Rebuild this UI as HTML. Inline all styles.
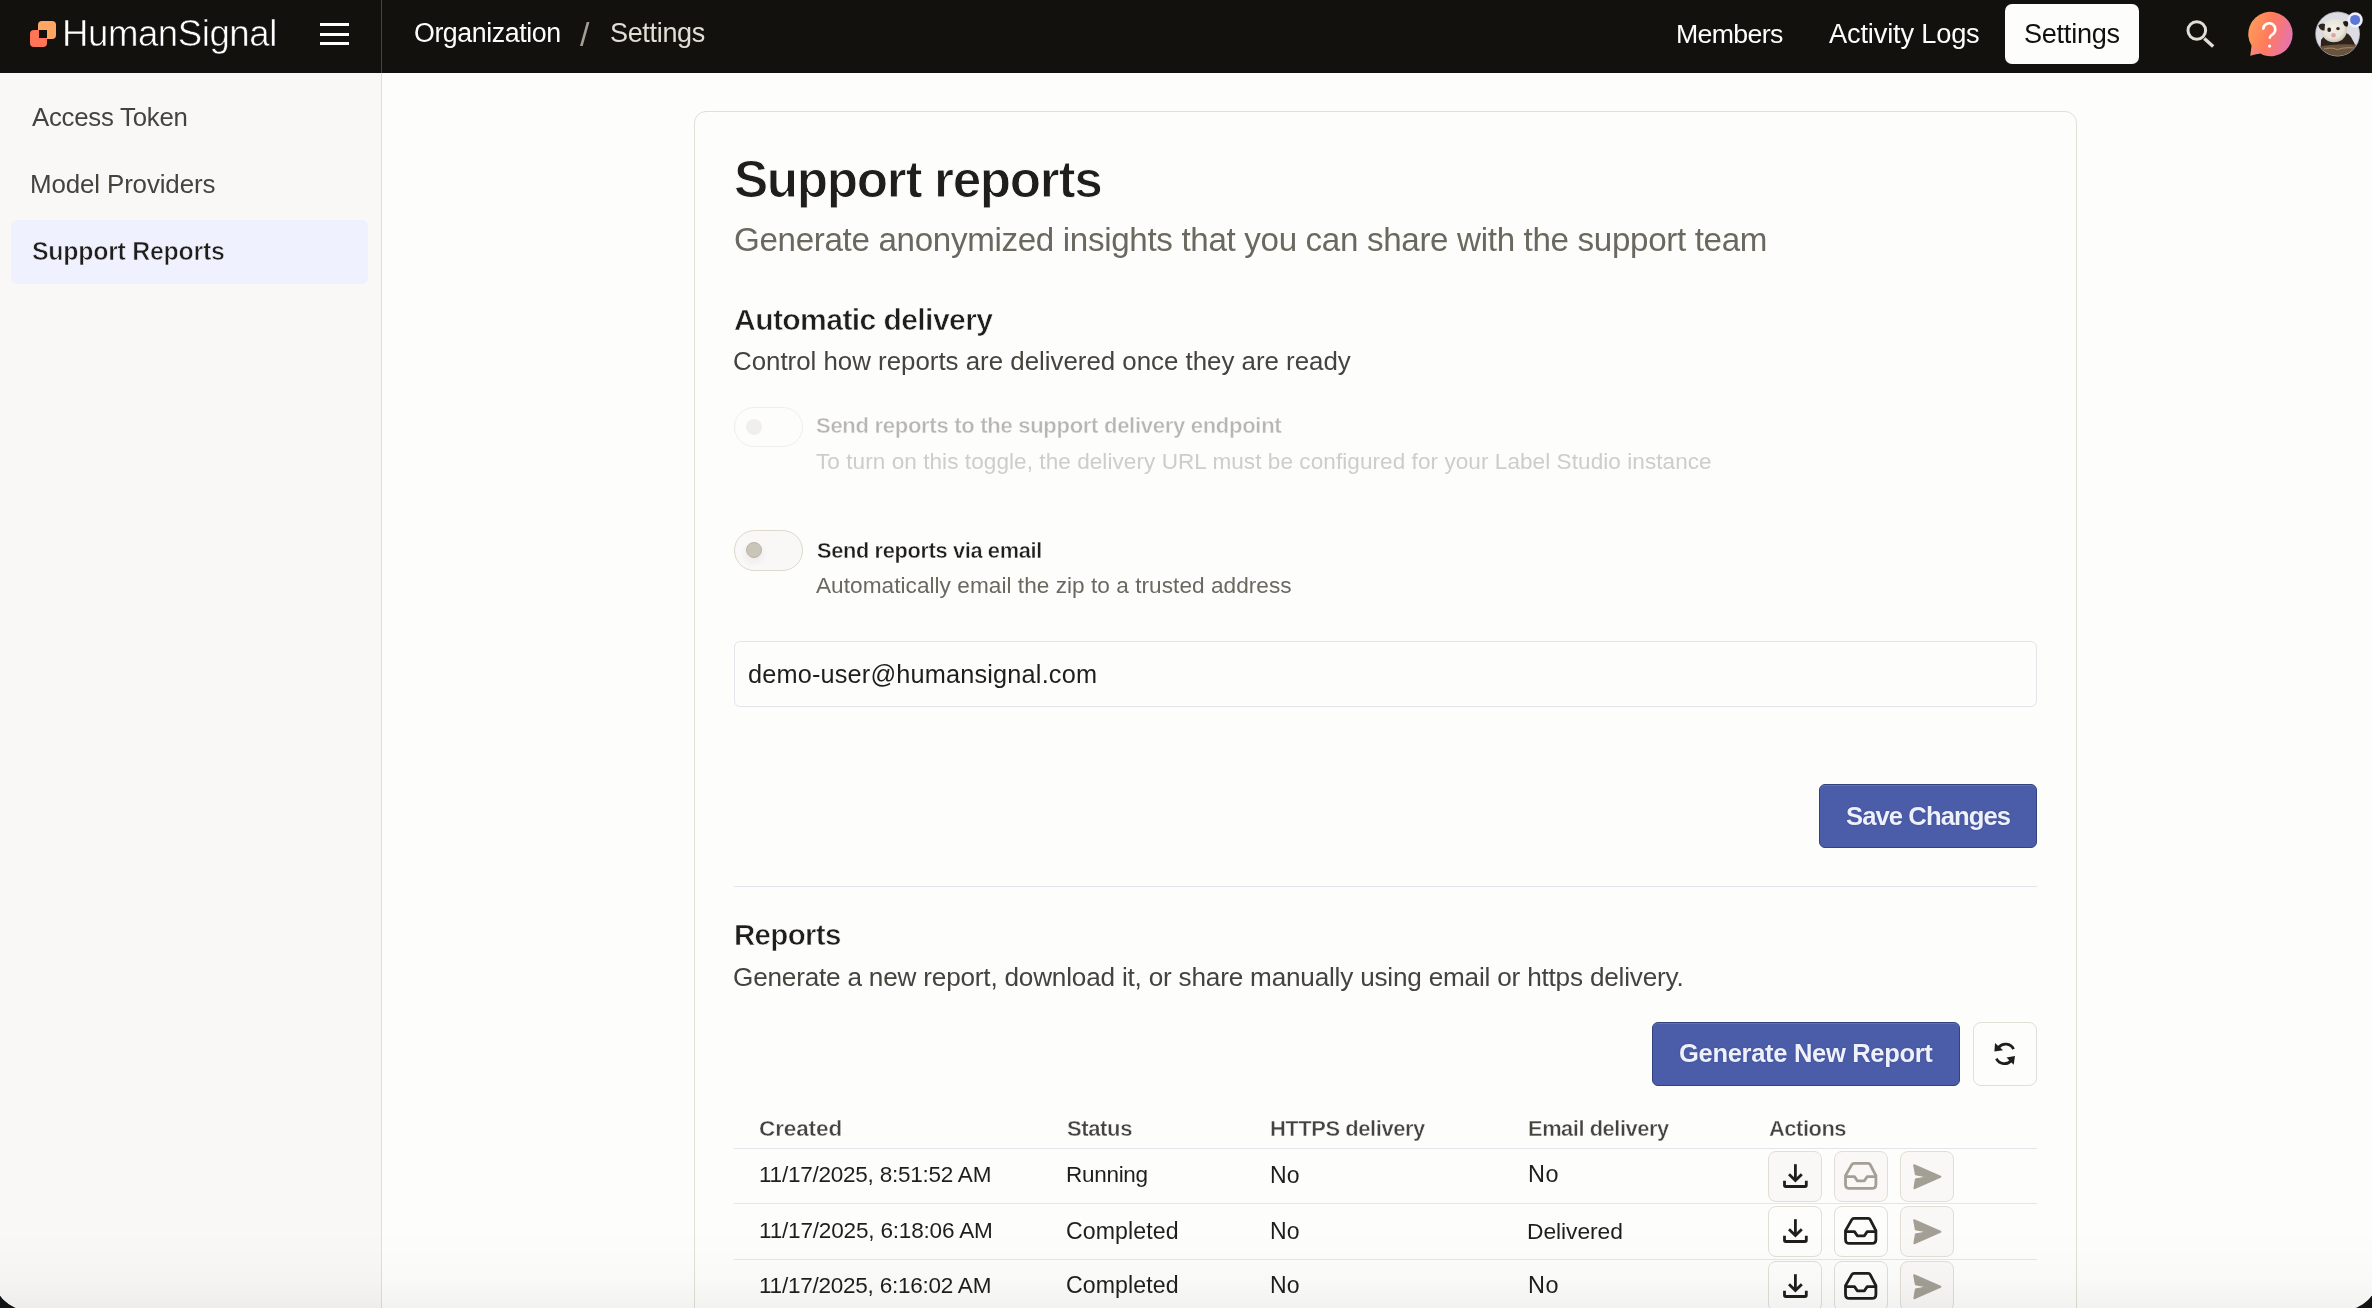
<!DOCTYPE html>
<html><head><meta charset="utf-8"><style>
*{box-sizing:border-box;margin:0;padding:0}
html,body{width:2372px;height:1308px;overflow:hidden;background:#111315}
body{font-family:"Liberation Sans",sans-serif;position:relative}
.win{position:absolute;left:-6px;top:0;width:2384px;height:1310px;background:#fdfdfc;border-bottom-left-radius:34px;border-bottom-right-radius:34px;overflow:hidden}
.abs{position:absolute}
.t{position:absolute;white-space:nowrap;will-change:transform}
.ic{position:absolute;overflow:visible}
.ab{position:absolute;width:54px;height:51px;border:1px solid #e1ded5;border-radius:8px}
</style></head><body>
<div class="win"><div style="position:absolute;left:6px;top:0;width:2372px;height:1308px">
<!-- nav -->
<div class="abs" style="left:0;top:0;width:2372px;height:73px;background:#12110d"></div>
<div class="abs" style="left:381px;top:0;width:1px;height:73px;background:#45433e"></div>
<!-- logo -->
<div class="abs" style="left:38px;top:21.2px;width:17.8px;height:17.9px;background:#ffa663;border-radius:4px"></div>
<div class="abs" style="left:29.9px;top:29.8px;width:17.3px;height:17.3px;background:#ff7556;border-radius:4px"></div>
<div class="abs" style="left:39px;top:30.2px;width:7.9px;height:7.7px;background:#12110d"></div>
<!-- hamburger -->
<div class="abs" style="left:320px;top:23px;width:29px;height:3px;background:#fff"></div>
<div class="abs" style="left:320px;top:32.5px;width:29px;height:3.2px;background:#fff"></div>
<div class="abs" style="left:320px;top:42px;width:29px;height:3px;background:#fff"></div>
<!-- settings btn -->
<div class="abs" style="left:2005px;top:4px;width:134px;height:60px;background:#fdfdfc;border-radius:7px"></div>
<div class="t" id="e0" style="left:61.56px;top:15.91px;font-size:36.61px;line-height:36.61px;letter-spacing:-0.448px;color:#ffffff;-webkit-text-stroke:0.6px #12110d;">HumanSignal</div><div class="t" id="e1" style="left:414.16px;top:19.73px;font-size:26.78px;line-height:26.78px;letter-spacing:-0.429px;color:#fdfdfc;">Organization</div><div class="t" id="e2" style="left:580.00px;top:17.65px;font-size:33.85px;line-height:33.85px;letter-spacing:0.000px;color:#a49f95;">/</div><div class="t" id="e3" style="left:609.70px;top:19.55px;font-size:26.99px;line-height:26.99px;letter-spacing:-0.324px;color:#e1ded5;">Settings</div><div class="t" id="e4" style="left:1676.40px;top:20.71px;font-size:26.69px;line-height:26.69px;letter-spacing:-0.647px;color:#fdfdfc;">Members</div><div class="t" id="e5" style="left:1829.00px;top:20.24px;font-size:27.24px;line-height:27.24px;letter-spacing:-0.178px;color:#fdfdfc;">Activity Logs</div><div class="t" id="e6" style="left:2024.20px;top:20.36px;font-size:27.10px;line-height:27.10px;letter-spacing:-0.267px;color:#12110d;">Settings</div>
<!-- search -->
<svg class="ic" style="left:2180px;top:14px" width="40" height="40" viewBox="0 0 40 40" fill="none" stroke="#e1ded5" stroke-width="3">
<circle cx="16.8" cy="16.5" r="8.8"/><path d="M24.3 24.4L33.2 32.4" stroke-width="3.4" stroke-linecap="butt"/></svg>
<!-- help -->
<svg class="ic" style="left:2240px;top:4px" width="60" height="60" viewBox="2240 4 60 60">
<defs><linearGradient id="hg" gradientUnits="userSpaceOnUse" x1="2248" y1="28" x2="2293" y2="42"><stop offset="0" stop-color="#ff9b58"/><stop offset="0.45" stop-color="#ff7b5c"/><stop offset="1" stop-color="#e373b8"/></linearGradient>
<linearGradient id="hg2" gradientUnits="userSpaceOnUse" x1="2250" y1="46" x2="2262" y2="56"><stop offset="0" stop-color="#f57f86"/><stop offset="1" stop-color="#e47ad0"/></linearGradient></defs>
<path d="M2251.6 45.8L2250.3 55.8Q2256 54.2 2260.8 53.6Q2262.6 54.9 2265 55.6A22.2 22.2 0 1 0 2251.6 45.8Z" fill="url(#hg)"/>
<path d="M2251.6 45.8L2250.3 55.8Q2256 54.2 2260.8 53.6Q2262.6 54.9 2265 55.6L2259 49Z" fill="url(#hg2)" opacity="0.3"/>
<path d="M2263.3 28.6A6 6 0 1 1 2272.6 34.3Q2269.8 36 2269.8 37.6" fill="none" stroke="#fff" stroke-width="2.6" stroke-linecap="round"/>
<circle cx="2269.6" cy="46.1" r="1.6" fill="#fff"/></svg>
<!-- avatar -->
<svg class="ic" style="left:2310px;top:6px" width="62" height="56" viewBox="2310 6 62 56">
<defs><clipPath id="av"><circle cx="2337.6" cy="34" r="21.6"/></clipPath>
<radialGradient id="fur" cx="0.45" cy="0.4" r="0.6"><stop offset="0" stop-color="#f4f1ea"/><stop offset="0.7" stop-color="#e8e3d8"/><stop offset="1" stop-color="#c9c1b3"/></radialGradient></defs>
<circle cx="2337.6" cy="34" r="22.4" fill="#a9a8b0"/>
<g clip-path="url(#av)">
<rect x="2310" y="6" width="62" height="56" fill="#dcdde2"/>
<path d="M2320 62L2321 40Q2325 33 2336 33Q2346 30 2351 37L2358 50L2360 62Z" fill="#2e221c"/>
<path d="M2322 31Q2323 20 2334 19Q2345 18.5 2347 27Q2348 35 2342 40Q2335 44 2328 41Q2321 37 2322 31Z" fill="url(#fur)"/>
<path d="M2318.3 25.5Q2321 22.5 2325 24L2324.5 30.5Q2320 31 2318.3 25.5Z" fill="#2d2520"/>
<path d="M2343 22Q2346 20 2348.5 22.5L2347.5 26.5Q2344 27.5 2343 22Z" fill="#221a16"/>
<ellipse cx="2329.2" cy="29.8" rx="1.9" ry="2.2" fill="#2a211c"/><ellipse cx="2338" cy="28.6" rx="1.8" ry="1.6" fill="#3b2b22"/>
<ellipse cx="2333.5" cy="35.2" rx="2.3" ry="2.3" fill="#dba4a2"/>
<path d="M2318 47Q2336 43 2360 45V62H2318Z" fill="#6a543d"/>
<path d="M2324 49Q2331 47 2337 49.5Q2345 47 2355 48" fill="none" stroke="#9c8266" stroke-width="1.2"/>
</g>
<circle cx="2355.2" cy="19.8" r="7.6" fill="#eef0fb"/><circle cx="2355.1" cy="19.9" r="5" fill="#5b78d8"/>
</svg>
<!-- sidebar -->
<div class="abs" style="left:0;top:73px;width:381px;height:1235px;background:#f9f8f6"></div>
<div class="abs" style="left:381px;top:73px;width:1px;height:1235px;background:#e1ded5"></div>
<div class="abs" style="left:11px;top:220px;width:357px;height:64px;background:#eff2fe;border-radius:6px"></div>
<div class="t" id="e7" style="left:32.00px;top:104.60px;font-size:25.75px;line-height:25.75px;letter-spacing:-0.232px;color:#45433e;">Access Token</div><div class="t" id="e8" style="left:30.40px;top:172.07px;font-size:25.91px;line-height:25.91px;letter-spacing:-0.130px;color:#45433e;">Model Providers</div><div class="t" id="e9" style="left:32.00px;top:239.39px;font-size:24.94px;line-height:24.94px;letter-spacing:-0.282px;color:#1f1e1b;font-weight:700;-webkit-text-stroke:0.6px #eff2fe;">Support Reports</div>
<!-- card -->
<div class="abs" style="left:694px;top:111px;width:1383px;height:1300px;border:1px solid #e1ded5;border-radius:12px;background:#fdfdfc"></div>
<!-- toggles -->
<div class="abs" style="left:734px;top:407px;width:69px;height:40px;border:1px solid #f0efeb;border-radius:20px;background:#fdfdfc"></div>
<div class="abs" style="left:746px;top:419px;width:16px;height:16px;border-radius:50%;background:#f0efeb"></div>
<div class="abs" style="left:734px;top:530px;width:69px;height:41px;border:1px solid #dcd8cc;border-radius:21px;background:#f9f8f6;box-shadow:inset 0 0 0 0 transparent"></div>
<div class="abs" style="left:740px;top:540px;width:28px;height:28px;border-radius:50%;background:radial-gradient(circle, rgba(0,0,0,0.06), rgba(0,0,0,0) 70%)"></div>
<div class="abs" style="left:746px;top:542px;width:16px;height:16px;border-radius:50%;background:#cac5b8;border:1px solid #bab4a6"></div>
<!-- input -->
<div class="abs" style="left:734px;top:641px;width:1303px;height:66px;border:1px solid #e4e4ec;border-radius:6px;background:#fdfdfc"></div>
<!-- save btn -->
<div class="abs" style="left:1819px;top:784px;width:218px;height:64px;border:1px solid #33427f;border-radius:6px;background:#4b5da8;box-shadow:inset 0 1px 0 rgba(255,255,255,0.13)"></div>
<!-- divider -->
<div class="abs" style="left:734px;top:886px;width:1303px;height:1px;background:#e4e4ec"></div>
<!-- generate btn -->
<div class="abs" style="left:1652px;top:1022px;width:308px;height:64px;border:1px solid #33427f;border-radius:6px;background:#4b5da8;box-shadow:inset 0 1px 0 rgba(255,255,255,0.13)"></div>
<div class="abs" style="left:1973px;top:1022px;width:64px;height:64px;border:1px solid #e1ded5;border-radius:8px;background:#fdfdfc"></div>
<svg class="ic" style="left:1990px;top:1039px" width="30" height="30" viewBox="1990 1039 30 30">
<path d="M2013.6 1049.2A9 9 0 0 0 1998.5 1047.5" fill="none" stroke="#1f1e1b" stroke-width="2.8"/>
<path d="M1995 1043L1994.4 1051.5L2003 1050.3Z" fill="#1f1e1b"/>
<path d="M1996.4 1058.6A9 9 0 0 0 2011.3 1060.5" fill="none" stroke="#1f1e1b" stroke-width="2.8"/>
<path d="M2015 1056.1L2013.7 1064.8L2006.5 1057.5Z" fill="#1f1e1b"/>
</svg>
<!-- table lines -->
<div class="abs" style="left:734px;top:1148px;width:1303px;height:1px;background:#e4e4ec"></div>
<div class="abs" style="left:734px;top:1203px;width:1303px;height:1px;background:#e4e4ec"></div>
<div class="abs" style="left:734px;top:1259px;width:1303px;height:1px;background:#e4e4ec"></div>
<div class="t" id="e10" style="left:733.90px;top:153.88px;font-size:51.29px;line-height:51.29px;letter-spacing:-1.343px;color:#1f1e1b;font-weight:700;-webkit-text-stroke:1px #fdfdfc;">Support reports</div><div class="t" id="e11" style="left:734.20px;top:223.23px;font-size:33.16px;line-height:33.16px;letter-spacing:-0.333px;color:#6b6860;">Generate anonymized insights that you can share with the support team</div><div class="t" id="e12" style="left:734.00px;top:304.52px;font-size:30.10px;line-height:30.10px;letter-spacing:-0.604px;color:#1f1e1b;font-weight:700;-webkit-text-stroke:0.6px #fdfdfc;">Automatic delivery</div><div class="t" id="e13" style="left:733.20px;top:349.11px;font-size:25.86px;line-height:25.86px;letter-spacing:-0.006px;color:#45433e;">Control how reports are delivered once they are ready</div><div class="t" id="e14" style="left:815.74px;top:415.22px;font-size:22.06px;line-height:22.06px;letter-spacing:-0.302px;color:#b8b6b1;font-weight:700;-webkit-text-stroke:0.4px #fdfdfc;">Send reports to the support delivery endpoint</div><div class="t" id="e15" style="left:816.00px;top:450.72px;font-size:22.54px;line-height:22.54px;letter-spacing:0.067px;color:#cecdc9;">To turn on this toggle, the delivery URL must be configured for your Label Studio instance</div><div class="t" id="e16" style="left:816.54px;top:539.53px;font-size:21.82px;line-height:21.82px;letter-spacing:-0.360px;color:#1f1e1b;font-weight:700;-webkit-text-stroke:0.4px #fdfdfc;">Send reports via email</div><div class="t" id="e17" style="left:816.00px;top:574.85px;font-size:22.62px;line-height:22.62px;letter-spacing:0.039px;color:#6b6860;">Automatically email the zip to a trusted address</div><div class="t" id="e18" style="left:747.70px;top:661.68px;font-size:25.30px;line-height:25.30px;letter-spacing:0.171px;color:#1f1e1b;">demo-user@humansignal.com</div><div class="t" id="e19" style="left:1846.20px;top:803.67px;font-size:25.67px;line-height:25.67px;letter-spacing:-0.940px;color:#eef0fb;font-weight:700;text-shadow:0 0 1.5px rgba(25,35,90,0.45);">Save Changes</div><div class="t" id="e20" style="left:734.32px;top:919.96px;font-size:29.46px;line-height:29.46px;letter-spacing:-0.668px;color:#1f1e1b;font-weight:700;-webkit-text-stroke:0.6px #fdfdfc;">Reports</div><div class="t" id="e21" style="left:733.28px;top:963.86px;font-size:26.15px;line-height:26.15px;letter-spacing:-0.199px;color:#45433e;">Generate a new report, download it, or share manually using email or https delivery.</div><div class="t" id="e22" style="left:1679.08px;top:1041.06px;font-size:25.57px;line-height:25.57px;letter-spacing:-0.338px;color:#eef0fb;font-weight:700;text-shadow:0 0 1.5px rgba(25,35,90,0.45);">Generate New Report</div><div class="t" id="e23" style="left:759.12px;top:1118.16px;font-size:22.50px;line-height:22.50px;letter-spacing:-0.110px;color:#45433e;font-weight:700;-webkit-text-stroke:0.4px #fdfdfc;">Created</div><div class="t" id="e24" style="left:1067.00px;top:1118.05px;font-size:22.04px;line-height:22.04px;letter-spacing:-0.389px;color:#45433e;font-weight:700;-webkit-text-stroke:0.4px #fdfdfc;">Status</div><div class="t" id="e25" style="left:1270.20px;top:1118.14px;font-size:21.92px;line-height:21.92px;letter-spacing:-0.425px;color:#45433e;font-weight:700;-webkit-text-stroke:0.4px #fdfdfc;">HTTPS delivery</div><div class="t" id="e26" style="left:1528.20px;top:1118.21px;font-size:21.84px;line-height:21.84px;letter-spacing:-0.430px;color:#45433e;font-weight:700;-webkit-text-stroke:0.4px #fdfdfc;">Email delivery</div><div class="t" id="e27" style="left:1769.00px;top:1118.15px;font-size:21.91px;line-height:21.91px;letter-spacing:-0.467px;color:#45433e;font-weight:700;-webkit-text-stroke:0.4px #fdfdfc;">Actions</div><div class="t" id="e28" style="left:759.20px;top:1164.05px;font-size:22.50px;line-height:22.50px;letter-spacing:-0.233px;color:#1f1e1b;">11/17/2025, 8:51:52 AM</div><div class="t" id="e29" style="left:1065.90px;top:1164.05px;font-size:22.51px;line-height:22.51px;letter-spacing:-0.284px;color:#1f1e1b;">Running</div><div class="t" id="e30" style="left:1270.44px;top:1163.59px;font-size:23.05px;line-height:23.05px;letter-spacing:0.102px;color:#1f1e1b;">No</div><div class="t" id="e31" style="left:1527.90px;top:1163.26px;font-size:23.44px;line-height:23.44px;letter-spacing:0.612px;color:#1f1e1b;">No</div><div class="t" id="e32" style="left:759.20px;top:1219.99px;font-size:22.57px;line-height:22.57px;letter-spacing:-0.197px;color:#1f1e1b;">11/17/2025, 6:18:06 AM</div><div class="t" id="e33" style="left:1065.94px;top:1219.52px;font-size:23.13px;line-height:23.13px;letter-spacing:0.100px;color:#1f1e1b;">Completed</div><div class="t" id="e34" style="left:1270.44px;top:1219.59px;font-size:23.05px;line-height:23.05px;letter-spacing:0.102px;color:#1f1e1b;">No</div><div class="t" id="e35" style="left:1526.90px;top:1219.77px;font-size:22.83px;line-height:22.83px;letter-spacing:-0.070px;color:#1f1e1b;">Delivered</div><div class="t" id="e36" style="left:759.20px;top:1274.95px;font-size:22.50px;line-height:22.50px;letter-spacing:-0.233px;color:#1f1e1b;">11/17/2025, 6:16:02 AM</div><div class="t" id="e37" style="left:1065.94px;top:1274.42px;font-size:23.13px;line-height:23.13px;letter-spacing:0.100px;color:#1f1e1b;">Completed</div><div class="t" id="e38" style="left:1270.44px;top:1274.49px;font-size:23.05px;line-height:23.05px;letter-spacing:0.102px;color:#1f1e1b;">No</div><div class="t" id="e39" style="left:1527.90px;top:1274.16px;font-size:23.44px;line-height:23.44px;letter-spacing:0.612px;color:#1f1e1b;">No</div><div class="ab" style="left:1768px;top:1151.3px;background:#f9f8f6"></div><div class="ab" style="left:1834px;top:1151.3px;background:#f9f8f6"></div><div class="ab" style="left:1900px;top:1151.3px;background:#f9f8f6"></div><svg class="ic" style="left:1783px;top:1164.0px" width="26" height="26" viewBox="0 0 26 26" fill="none" stroke="#1f1e1b" stroke-width="2.8">
<path d="M12.4 0.2V16.2"/><path d="M6 10.2L12.4 16.6L18.8 10.2"/><path d="M1.5 16.8V21.2Q1.5 22.5 2.8 22.5H22Q23.3 22.5 23.3 21.2V16.8"/></svg><svg class="ic" style="left:1844.3px;top:1161.8px" width="36" height="30" viewBox="0 0 36 30" fill="none" stroke="#a49f95" stroke-width="2.8" stroke-linejoin="round">
<path d="M10 1.4H24.2Q25.6 1.4 26.2 2.6L31.9 13.6V22.4Q31.9 26.4 27.9 26.4H5.5Q1.5 26.4 1.5 22.4V13.6L7.8 2.6Q8.5 1.4 10 1.4Z"/><path d="M1.5 14.6H10.5L13.3 18.8H20.4L23.2 14.6H31.9"/></svg><svg class="ic" style="left:1912px;top:1163.8px" width="30" height="26" viewBox="0 0 30 26" fill="#a49f95" stroke="#a49f95" stroke-width="1.2" stroke-linejoin="round">
<path d="M1.8 1.4Q2 0.6 2.8 1L28.4 12.3Q29.2 12.7 28.4 13.1L2.8 24.5Q2 24.9 2 24L3.5 15L15.2 12.9L3.5 10.7Z"/></svg><div class="ab" style="left:1768px;top:1206.3px;background:#fdfdfc"></div><div class="ab" style="left:1834px;top:1206.3px;background:#fdfdfc"></div><div class="ab" style="left:1900px;top:1206.3px;background:#f9f8f6"></div><svg class="ic" style="left:1783px;top:1219.0px" width="26" height="26" viewBox="0 0 26 26" fill="none" stroke="#1f1e1b" stroke-width="2.8">
<path d="M12.4 0.2V16.2"/><path d="M6 10.2L12.4 16.6L18.8 10.2"/><path d="M1.5 16.8V21.2Q1.5 22.5 2.8 22.5H22Q23.3 22.5 23.3 21.2V16.8"/></svg><svg class="ic" style="left:1844.3px;top:1216.8px" width="36" height="30" viewBox="0 0 36 30" fill="none" stroke="#1f1e1b" stroke-width="2.8" stroke-linejoin="round">
<path d="M10 1.4H24.2Q25.6 1.4 26.2 2.6L31.9 13.6V22.4Q31.9 26.4 27.9 26.4H5.5Q1.5 26.4 1.5 22.4V13.6L7.8 2.6Q8.5 1.4 10 1.4Z"/><path d="M1.5 14.6H10.5L13.3 18.8H20.4L23.2 14.6H31.9"/></svg><svg class="ic" style="left:1912px;top:1218.8px" width="30" height="26" viewBox="0 0 30 26" fill="#a49f95" stroke="#a49f95" stroke-width="1.2" stroke-linejoin="round">
<path d="M1.8 1.4Q2 0.6 2.8 1L28.4 12.3Q29.2 12.7 28.4 13.1L2.8 24.5Q2 24.9 2 24L3.5 15L15.2 12.9L3.5 10.7Z"/></svg><div class="ab" style="left:1768px;top:1261.4px;background:#fdfdfc"></div><div class="ab" style="left:1834px;top:1261.4px;background:#fdfdfc"></div><div class="ab" style="left:1900px;top:1261.4px;background:#f9f8f6"></div><svg class="ic" style="left:1783px;top:1274.1px" width="26" height="26" viewBox="0 0 26 26" fill="none" stroke="#1f1e1b" stroke-width="2.8">
<path d="M12.4 0.2V16.2"/><path d="M6 10.2L12.4 16.6L18.8 10.2"/><path d="M1.5 16.8V21.2Q1.5 22.5 2.8 22.5H22Q23.3 22.5 23.3 21.2V16.8"/></svg><svg class="ic" style="left:1844.3px;top:1271.9px" width="36" height="30" viewBox="0 0 36 30" fill="none" stroke="#1f1e1b" stroke-width="2.8" stroke-linejoin="round">
<path d="M10 1.4H24.2Q25.6 1.4 26.2 2.6L31.9 13.6V22.4Q31.9 26.4 27.9 26.4H5.5Q1.5 26.4 1.5 22.4V13.6L7.8 2.6Q8.5 1.4 10 1.4Z"/><path d="M1.5 14.6H10.5L13.3 18.8H20.4L23.2 14.6H31.9"/></svg><svg class="ic" style="left:1912px;top:1273.9px" width="30" height="26" viewBox="0 0 30 26" fill="#a49f95" stroke="#a49f95" stroke-width="1.2" stroke-linejoin="round">
<path d="M1.8 1.4Q2 0.6 2.8 1L28.4 12.3Q29.2 12.7 28.4 13.1L2.8 24.5Q2 24.9 2 24L3.5 15L15.2 12.9L3.5 10.7Z"/></svg>
<!-- bottom shade -->
<div class="abs" style="left:0;top:1230px;width:2372px;height:78px;background:linear-gradient(to bottom, rgba(0,0,0,0) 0%, rgba(0,0,0,0.006) 40%, rgba(0,0,0,0.018) 70%, rgba(0,0,0,0.045) 100%)"></div>
</div></div>
</body></html>
